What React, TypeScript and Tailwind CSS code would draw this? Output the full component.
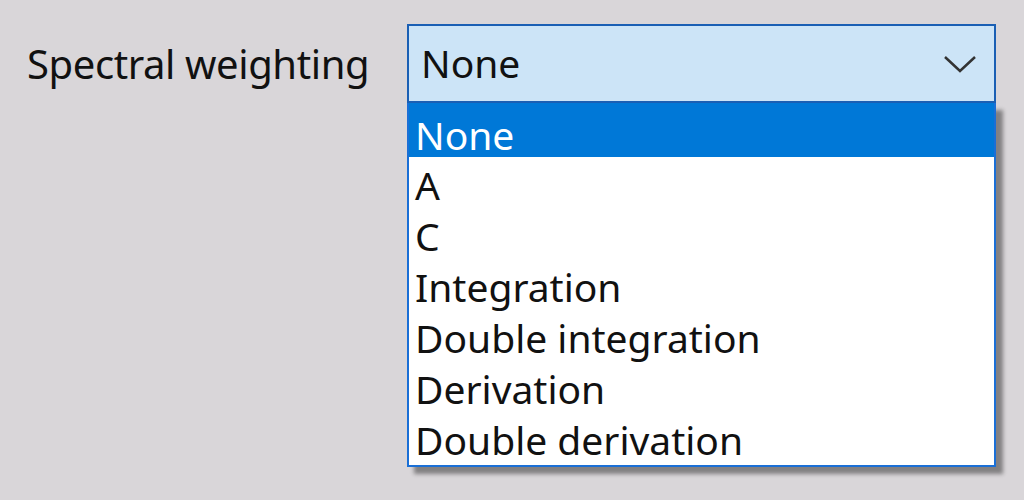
import React from "react";

const items = ["None", "A", "C", "Integration", "Double integration", "Derivation", "Double derivation"];

export default function App() {
  return (
    <div
      className="w-[1024px] h-[500px] bg-[#d9d6d9] overflow-hidden text-[#111111]"
      style={{ fontFamily: '"Noto Sans", "Open Sans", sans-serif' }}
    >
      <div className="flex items-start pt-[24px]">
        <div className="w-[407px] pl-[27px] h-[79px] flex items-center text-[40px] tracking-[-0.4px]">
          Spectral weighting
        </div>
        <div className="w-[589px] relative">
          <div className="h-[79px] border-2 border-[#1a5fb4] bg-[#cce4f7] flex items-center justify-between pl-[12px] pr-[16px] text-[39px]">
            <span>None</span>
            <svg width="34" height="20" viewBox="0 0 34 20" className="mr-[1px]">
              <path d="M2 3 L17 17 L32 3" fill="none" stroke="#333" strokeWidth="2.5" />
            </svg>
          </div>
          <div className="border-2 border-t-0 border-[#1a6fd6] bg-white shadow-[7px_7px_4px_rgba(0,0,0,0.4)] text-[39px] pb-[2px]">
            {items.map((it, i) => (
              <div
                key={it}
                className={
                  "flex items-center pl-[6px] leading-none " +
                  (i === 0 ? "h-[54px] pt-[9px] bg-[#0078d7] text-white" : "h-[51px] pt-[4px]")
                }
              >
                {it}
              </div>
            ))}
          </div>
        </div>
      </div>
    </div>
  );
}
